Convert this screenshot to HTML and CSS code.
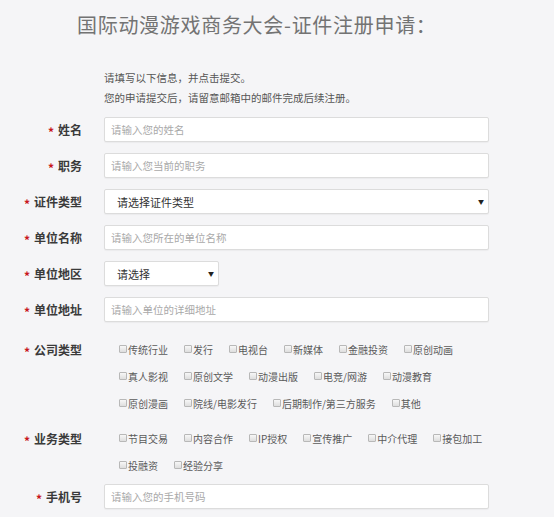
FILE: index.html
```html
<!DOCTYPE html>
<html lang="zh-CN">
<head>
<meta charset="utf-8">
<title>证件注册申请</title>
<link rel="stylesheet" href="styles.css">
</head>
<body>
<div class="page">
  <h1 class="title">国际动漫游戏商务大会-证件注册申请：</h1>
  <div class="intro">
    <p>请填写以下信息，并点击提交。</p>
    <p>您的申请提交后，请留意邮箱中的邮件完成后续注册。</p>
  </div>
  <form class="form">
    <div class="row">
      <label class="lbl"><span class="req">*</span>姓名</label>
      <div class="field"><input class="input" type="text" placeholder="请输入您的姓名"></div>
    </div>
    <div class="row">
      <label class="lbl"><span class="req">*</span>职务</label>
      <div class="field"><input class="input" type="text" placeholder="请输入您当前的职务"></div>
    </div>
    <div class="row">
      <label class="lbl"><span class="req">*</span>证件类型</label>
      <div class="field">
        <div class="select">
          <select><option>请选择证件类型</option></select>
          <span class="arrow">▼</span>
        </div>
      </div>
    </div>
    <div class="row">
      <label class="lbl"><span class="req">*</span>单位名称</label>
      <div class="field"><input class="input" type="text" placeholder="请输入您所在的单位名称"></div>
    </div>
    <div class="row">
      <label class="lbl"><span class="req">*</span>单位地区</label>
      <div class="field">
        <div class="select select-short">
          <select><option>请选择</option></select>
          <span class="arrow">▼</span>
        </div>
      </div>
    </div>
    <div class="row">
      <label class="lbl"><span class="req">*</span>单位地址</label>
      <div class="field"><input class="input" type="text" placeholder="请输入单位的详细地址"></div>
    </div>
    <div class="row row-company">
      <label class="lbl lbl-check"><span class="req">*</span>公司类型</label>
      <div class="field checks">
        <div class="check-line">
          <label class="check"><input type="checkbox">传统行业</label>
          <label class="check"><input type="checkbox">发行</label>
          <label class="check"><input type="checkbox">电视台</label>
          <label class="check"><input type="checkbox">新媒体</label>
          <label class="check"><input type="checkbox">金融投资</label>
          <label class="check"><input type="checkbox">原创动画</label>
        </div>
        <div class="check-line">
          <label class="check"><input type="checkbox">真人影视</label>
          <label class="check"><input type="checkbox">原创文学</label>
          <label class="check"><input type="checkbox">动漫出版</label>
          <label class="check"><input type="checkbox">电竞/网游</label>
          <label class="check"><input type="checkbox">动漫教育</label>
        </div>
        <div class="check-line">
          <label class="check"><input type="checkbox">原创漫画</label>
          <label class="check"><input type="checkbox">院线/电影发行</label>
          <label class="check"><input type="checkbox">后期制作/第三方服务</label>
          <label class="check"><input type="checkbox">其他</label>
        </div>
      </div>
    </div>
    <div class="row row-business">
      <label class="lbl lbl-check"><span class="req">*</span>业务类型</label>
      <div class="field checks">
        <div class="check-line">
          <label class="check"><input type="checkbox">节目交易</label>
          <label class="check"><input type="checkbox">内容合作</label>
          <label class="check"><input type="checkbox">IP授权</label>
          <label class="check"><input type="checkbox">宣传推广</label>
          <label class="check"><input type="checkbox">中介代理</label>
          <label class="check"><input type="checkbox">接包加工</label>
        </div>
        <div class="check-line">
          <label class="check"><input type="checkbox">投融资</label>
          <label class="check"><input type="checkbox">经验分享</label>
        </div>
      </div>
    </div>
    <div class="row row-phone">
      <label class="lbl"><span class="req">*</span>手机号</label>
      <div class="field"><input class="input" type="text" placeholder="请输入您的手机号码"></div>
    </div>
  </form>
</div>
</body>
</html>
```

FILE: styles.css
```css
* { box-sizing: border-box; }

html, body {
  margin: 0;
  padding: 0;
  background: #f5f5f7;
}

body {
  font-family: "Noto Sans CJK SC", "Noto Sans", "Liberation Sans", sans-serif;
  color: #333;
}

.page {
  width: 554px;
  height: 517px;
  overflow: hidden;
}

.title {
  margin: 12px 0 0 77px;
  font-size: 20px;
  line-height: 26px;
  font-weight: normal;
  color: #737373;
  letter-spacing: 0.7px;
  white-space: nowrap;
}

.intro {
  margin: 30px 0 0 104px;
  font-size: 10.5px;
  line-height: 20px;
  color: #555;
}

.intro p { margin: 0; }

.form {
  margin-top: 9px;
  display: flex;
  flex-direction: column;
}

.row {
  display: grid;
  grid-template-columns: 82px 385px;
  column-gap: 22px;
  align-items: center;
  margin-top: 11px;
}

.row:first-child { margin-top: 0; }

.row-company { margin-top: 14px; align-items: start; }
.row-business { margin-top: 8px; align-items: start; }
.row-phone { margin-top: 5px; }

.lbl {
  display: flex;
  justify-content: flex-end;
  align-items: center;
  gap: 4px;
  font-size: 12px;
  font-weight: bold;
  color: #3a3a3a;
  line-height: 25px;
  white-space: nowrap;
}

.lbl-check { line-height: 27px; }

.req {
  color: #c8161d;
  font-size: 12px;
  font-weight: bold;
  line-height: 1;
  transform: translateY(2px);
}

.field { min-width: 0; }

.input {
  display: block;
  width: 100%;
  height: 25px;
  margin: 0;
  padding: 0 0 0 6px;
  border: 1px solid #dcdcdc;
  border-radius: 2px;
  background: #fff;
  box-shadow: 0 1px 1px rgba(0,0,0,0.04);
  font-family: inherit;
  font-size: 10.5px;
  color: #333;
  outline: none;
}

.input::placeholder { color: #a9a9a9; }

.select {
  position: relative;
  width: 100%;
  height: 25px;
}

.select-short { width: 115px; }

.select select {
  -webkit-appearance: none;
  appearance: none;
  display: block;
  width: 100%;
  height: 25px;
  margin: 0;
  padding: 0 0 0 12px;
  border: 1px solid #dcdcdc;
  border-radius: 2px;
  background: #fff;
  box-shadow: 0 1px 1px rgba(0,0,0,0.04);
  font-family: inherit;
  font-size: 11px;
  color: #333;
  outline: none;
}

.select .arrow {
  position: absolute;
  right: 5px;
  top: 0;
  line-height: 25px;
  font-size: 6px;
  color: #222;
  pointer-events: none;
}

.checks {
  padding-left: 15px;
}

.check-line {
  display: flex;
  gap: 16px;
  height: 27px;
  align-items: center;
}

.check {
  display: flex;
  align-items: center;
  gap: 1px;
  font-size: 10px;
  color: #5a5a5a;
  white-space: nowrap;
}

.check input {
  -webkit-appearance: none;
  appearance: none;
  width: 8px;
  height: 8px;
  margin: 0;
  border: 1px solid #b8b8b8;
  border-radius: 1px;
  background: linear-gradient(#f7f7f7, #dedede);
  transform: translateY(-1px);
}
```
